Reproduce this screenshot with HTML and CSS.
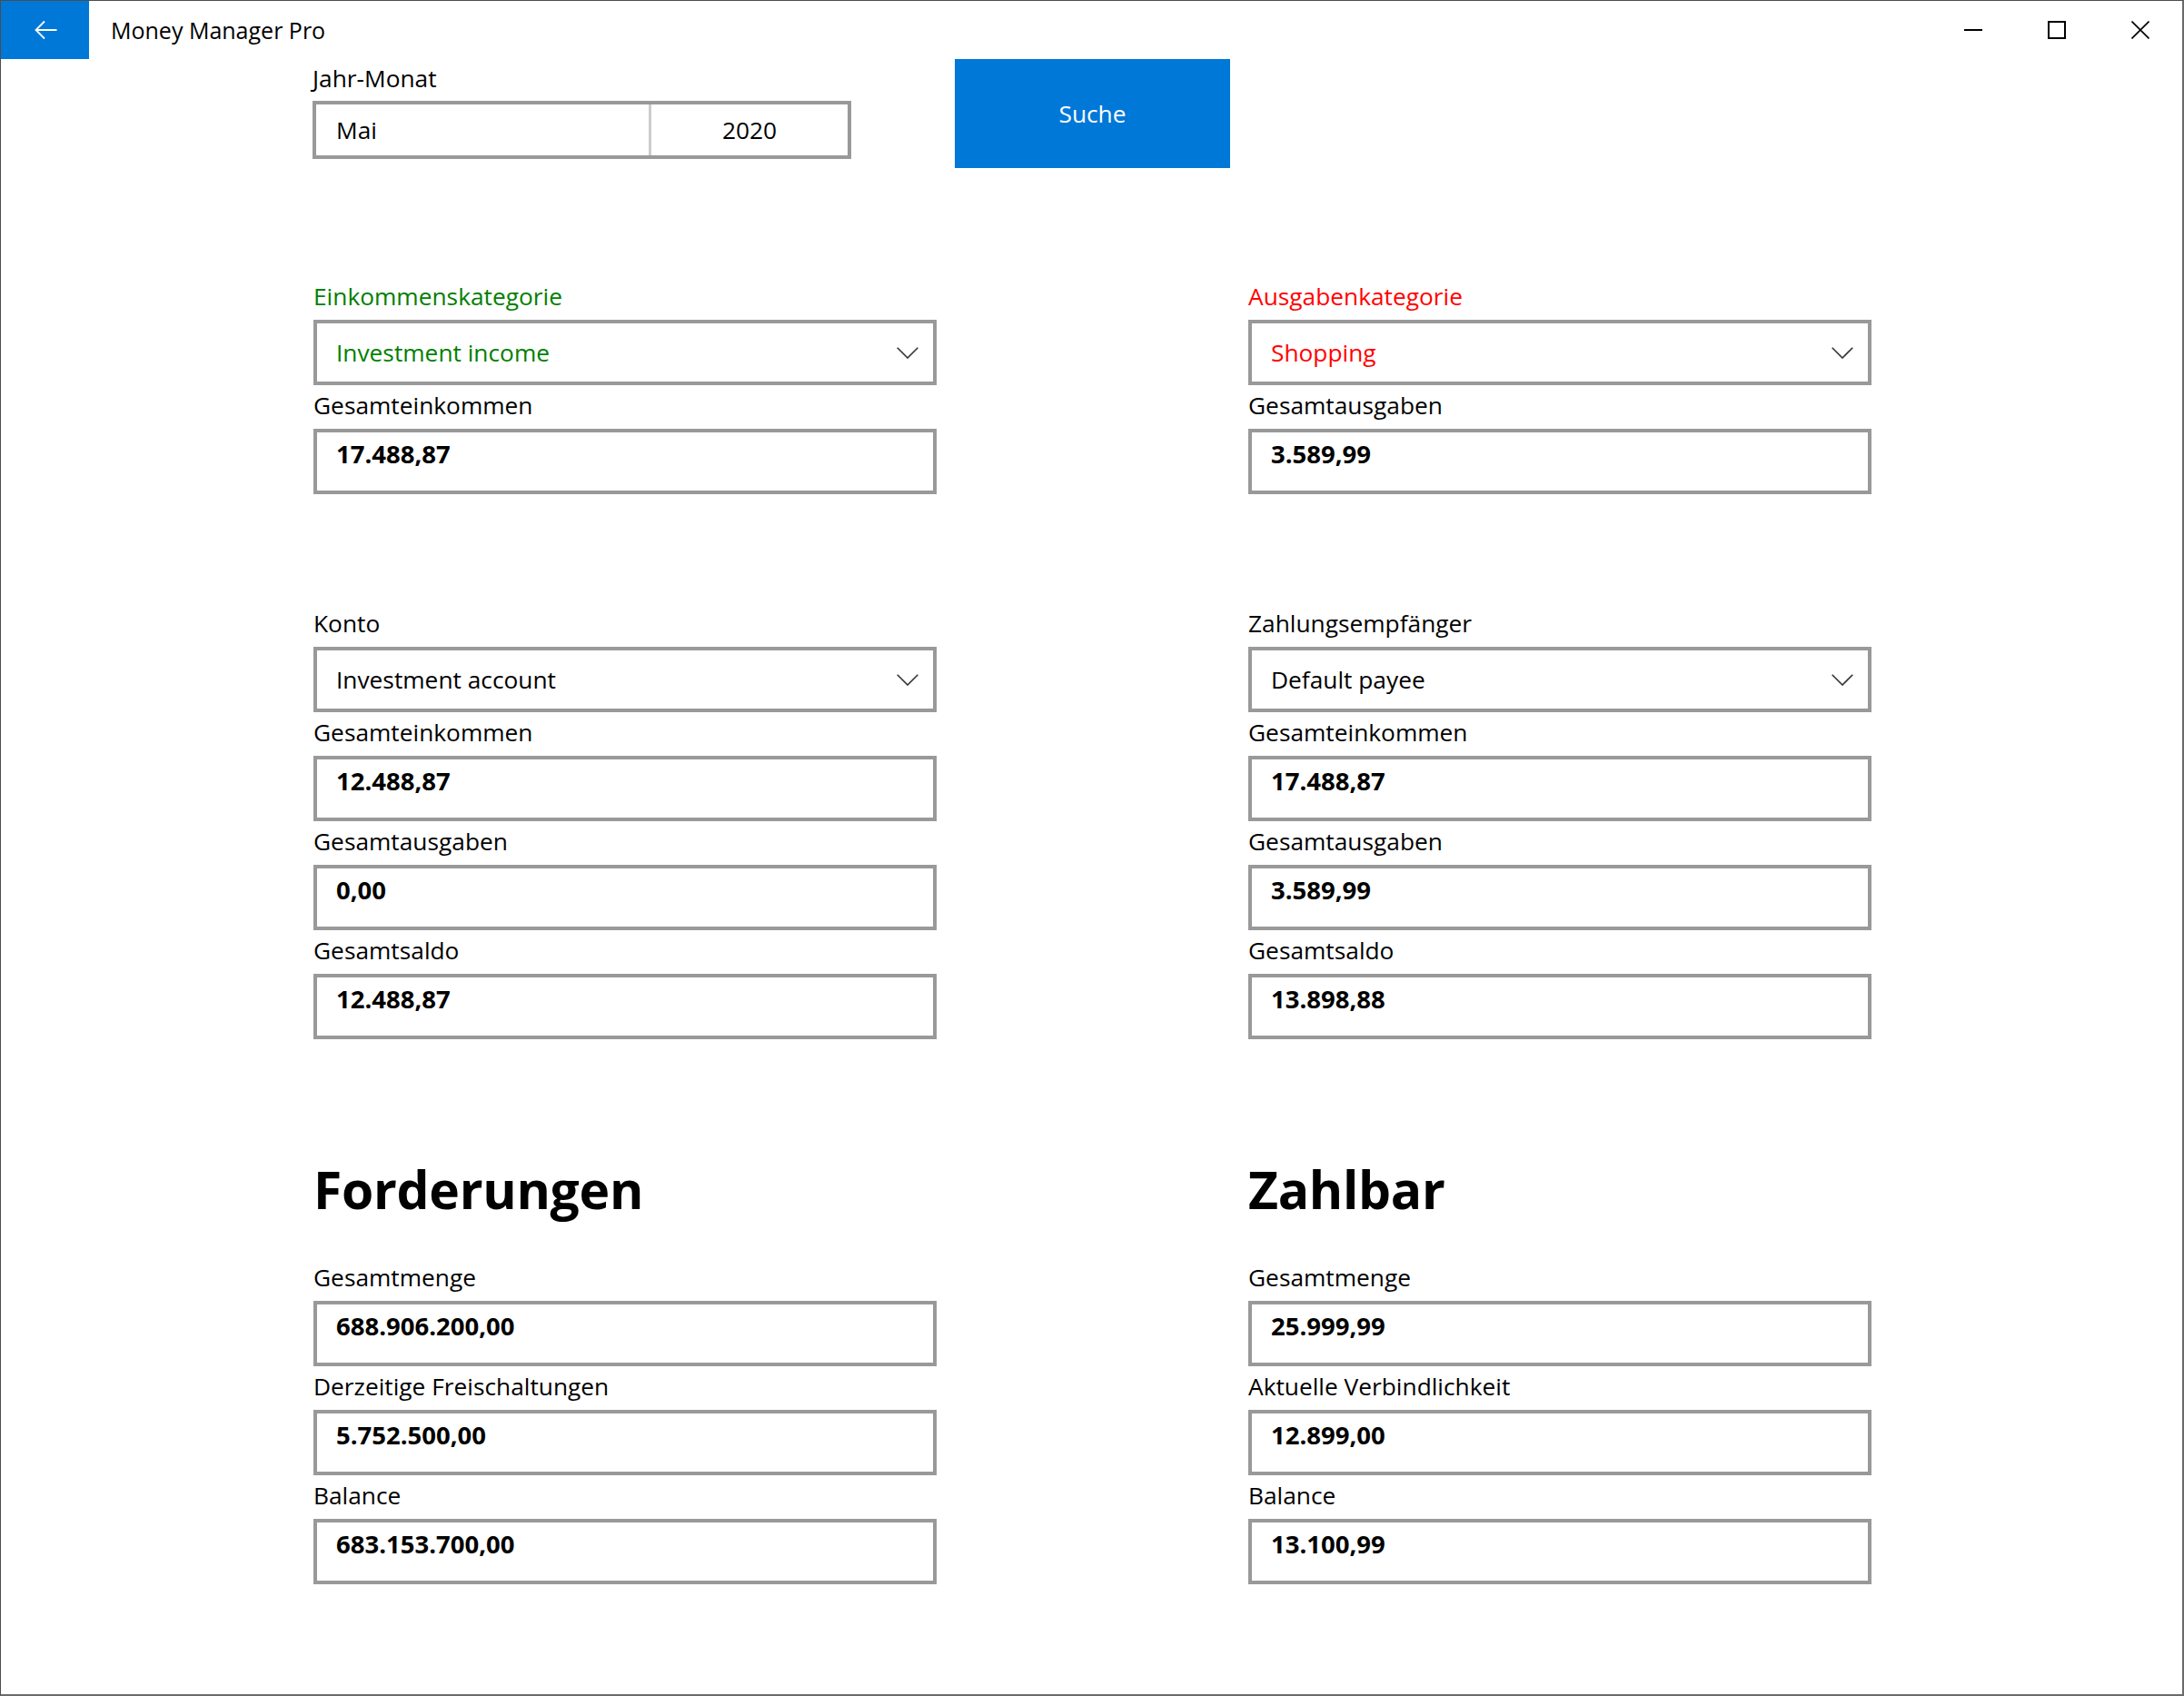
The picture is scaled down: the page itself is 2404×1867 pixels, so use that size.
FILE: index.html
```html
<!DOCTYPE html>
<html lang="de">
<head>
<meta charset="utf-8">
<title>Money Manager Pro</title>
<link rel="stylesheet" href="styles.css">
</head>
<body>
<div class="window">
  <header class="titlebar">
    <div class="back-btn">
      <svg width="26" height="22" viewBox="0 0 26 22" aria-hidden="true">
        <path d="M24.5 11 H1.5 M11 1.5 L1.5 11 L11 20.5" fill="none" stroke="#fff" stroke-width="1.8"/>
      </svg>
    </div>
    <div class="app-title">Money Manager Pro</div>
    <div class="caption">
      <div class="cap-btn">
        <svg width="20" height="20" viewBox="0 0 20 20"><path d="M0 10 H20" stroke="#000" stroke-width="2"/></svg>
      </div>
      <div class="cap-btn">
        <svg width="20" height="20" viewBox="0 0 20 20"><rect x="1" y="1" width="18" height="18" fill="none" stroke="#000" stroke-width="2"/></svg>
      </div>
      <div class="cap-btn">
        <svg width="20" height="20" viewBox="0 0 20 20"><path d="M0.5 0.5 L19.5 19.5 M19.5 0.5 L0.5 19.5" stroke="#000" stroke-width="1.6"/></svg>
      </div>
    </div>
  </header>

  <main class="content">
    <section class="top">
      <div class="date-field">
        <div class="label label-top">Jahr-Monat</div>
        <div class="datepicker">
          <div class="dp-month">Mai</div>
          <div class="dp-year">2020</div>
        </div>
      </div>
      <button class="search-btn">Suche</button>
    </section>

    <section class="grid row-1">
      <div class="col">
        <div class="field">
          <div class="label green">Einkommenskategorie</div>
          <div class="combo green"><span>Investment income</span><svg class="chev" width="24" height="13" viewBox="0 0 24 13"><path d="M0.7 0.7 L12 12 L23.3 0.7" fill="none" stroke="#333" stroke-width="1.6"/></svg></div>
        </div>
        <div class="field">
          <div class="label">Gesamteinkommen</div>
          <div class="valuebox">17.488,87</div>
        </div>
      </div>
      <div class="col">
        <div class="field">
          <div class="label red">Ausgabenkategorie</div>
          <div class="combo red"><span>Shopping</span><svg class="chev" width="24" height="13" viewBox="0 0 24 13"><path d="M0.7 0.7 L12 12 L23.3 0.7" fill="none" stroke="#333" stroke-width="1.6"/></svg></div>
        </div>
        <div class="field">
          <div class="label">Gesamtausgaben</div>
          <div class="valuebox">3.589,99</div>
        </div>
      </div>
    </section>

    <section class="grid row-2">
      <div class="col">
        <div class="field">
          <div class="label">Konto</div>
          <div class="combo"><span>Investment account</span><svg class="chev" width="24" height="13" viewBox="0 0 24 13"><path d="M0.7 0.7 L12 12 L23.3 0.7" fill="none" stroke="#333" stroke-width="1.6"/></svg></div>
        </div>
        <div class="field">
          <div class="label">Gesamteinkommen</div>
          <div class="valuebox">12.488,87</div>
        </div>
        <div class="field">
          <div class="label">Gesamtausgaben</div>
          <div class="valuebox">0,00</div>
        </div>
        <div class="field">
          <div class="label">Gesamtsaldo</div>
          <div class="valuebox">12.488,87</div>
        </div>
      </div>
      <div class="col">
        <div class="field">
          <div class="label">Zahlungsempfänger</div>
          <div class="combo"><span>Default payee</span><svg class="chev" width="24" height="13" viewBox="0 0 24 13"><path d="M0.7 0.7 L12 12 L23.3 0.7" fill="none" stroke="#333" stroke-width="1.6"/></svg></div>
        </div>
        <div class="field">
          <div class="label">Gesamteinkommen</div>
          <div class="valuebox">17.488,87</div>
        </div>
        <div class="field">
          <div class="label">Gesamtausgaben</div>
          <div class="valuebox">3.589,99</div>
        </div>
        <div class="field">
          <div class="label">Gesamtsaldo</div>
          <div class="valuebox">13.898,88</div>
        </div>
      </div>
    </section>

    <section class="grid row-3">
      <div class="col">
        <h2 class="heading">Forderungen</h2>
        <div class="field">
          <div class="label">Gesamtmenge</div>
          <div class="valuebox">688.906.200,00</div>
        </div>
        <div class="field">
          <div class="label">Derzeitige Freischaltungen</div>
          <div class="valuebox">5.752.500,00</div>
        </div>
        <div class="field">
          <div class="label">Balance</div>
          <div class="valuebox">683.153.700,00</div>
        </div>
      </div>
      <div class="col">
        <h2 class="heading">Zahlbar</h2>
        <div class="field">
          <div class="label">Gesamtmenge</div>
          <div class="valuebox">25.999,99</div>
        </div>
        <div class="field">
          <div class="label">Aktuelle Verbindlichkeit</div>
          <div class="valuebox">12.899,00</div>
        </div>
        <div class="field">
          <div class="label">Balance</div>
          <div class="valuebox">13.100,99</div>
        </div>
      </div>
    </section>
  </main>
</div>
</body>
</html>
```

FILE: styles.css
```css
* { box-sizing: border-box; }

html, body {
  margin: 0;
  padding: 0;
  background: #fff;
}

body {
  font-family: "Open Sans", "Noto Sans", sans-serif;
  color: #000;
}

.window {
  width: 2404px;
  height: 1867px;
  border-top: 1px solid #4d4d4d;
  border-left: 1px solid #4d4d4d;
  border-right: 2px solid #6b6b6b;
  border-bottom: 2px solid #6b6b6b;
  background: #fff;
  overflow: hidden;
}

/* ---------- title bar ---------- */
.titlebar {
  height: 64px;
  display: flex;
  align-items: center;
}

.back-btn {
  width: 97px;
  height: 64px;
  background: #0078d7;
  display: flex;
  align-items: center;
  justify-content: center;
  padding-left: 2px;
}

.app-title {
  margin-left: 24px;
  font-size: 25px;
  flex: 1;
  padding-bottom: 1px;
}

.caption {
  display: flex;
  height: 64px;
}

.cap-btn {
  width: 92px;
  height: 64px;
  display: flex;
  align-items: center;
  justify-content: center;
}

/* ---------- content ---------- */
.content {
  padding-left: 343px;
}

.label {
  font-size: 26.3px;
  line-height: 44px;
  height: 48px;
  white-space: nowrap;
}

.label-top {
  line-height: 42px;
  height: 46px;
}

.green { color: #008000; }
.red { color: #ff0000; }

/* top row */
.top {
  display: flex;
  align-items: flex-start;
}

.date-field {
  width: 593px;
}

.datepicker {
  height: 64px;
  border: 4px solid #999;
  display: flex;
  font-size: 26.3px;
}

.dp-month {
  width: 369px;
  border-right: 3px solid #ccc;
  padding-left: 22px;
  display: flex;
  align-items: center;
}

.dp-year {
  flex: 1;
  display: flex;
  align-items: center;
  justify-content: center;
}

.search-btn {
  margin-left: 114px;
  width: 303px;
  height: 120px;
  background: #0078d7;
  color: #fff;
  border: none;
  font-family: inherit;
  font-size: 26.3px;
  padding: 0;
}

/* grid rows */
.grid {
  display: grid;
  grid-template-columns: 686px 686px;
  column-gap: 343px;
  margin-left: 1px;
}

.row-1 { margin-top: 119px; }
.row-2 { margin-top: 120px; }
.row-3 { margin-top: 125px; }

.combo {
  height: 72px;
  border: 4px solid #999;
  display: flex;
  align-items: center;
  justify-content: space-between;
  padding-left: 21px;
  padding-right: 16px;
  font-size: 26.3px;
}

.combo .chev {
  display: block;
  margin-top: 1px;
}

.valuebox {
  height: 72px;
  border: 4px solid #999;
  padding: 5px 0 0 21px;
  font-size: 27.5px;
  font-weight: 700;
}

.heading {
  margin: 0 0 35px 0;
  font-size: 57px;
  font-weight: 700;
  line-height: 80px;
  height: 80px;
  letter-spacing: -0.3px;
}
```
